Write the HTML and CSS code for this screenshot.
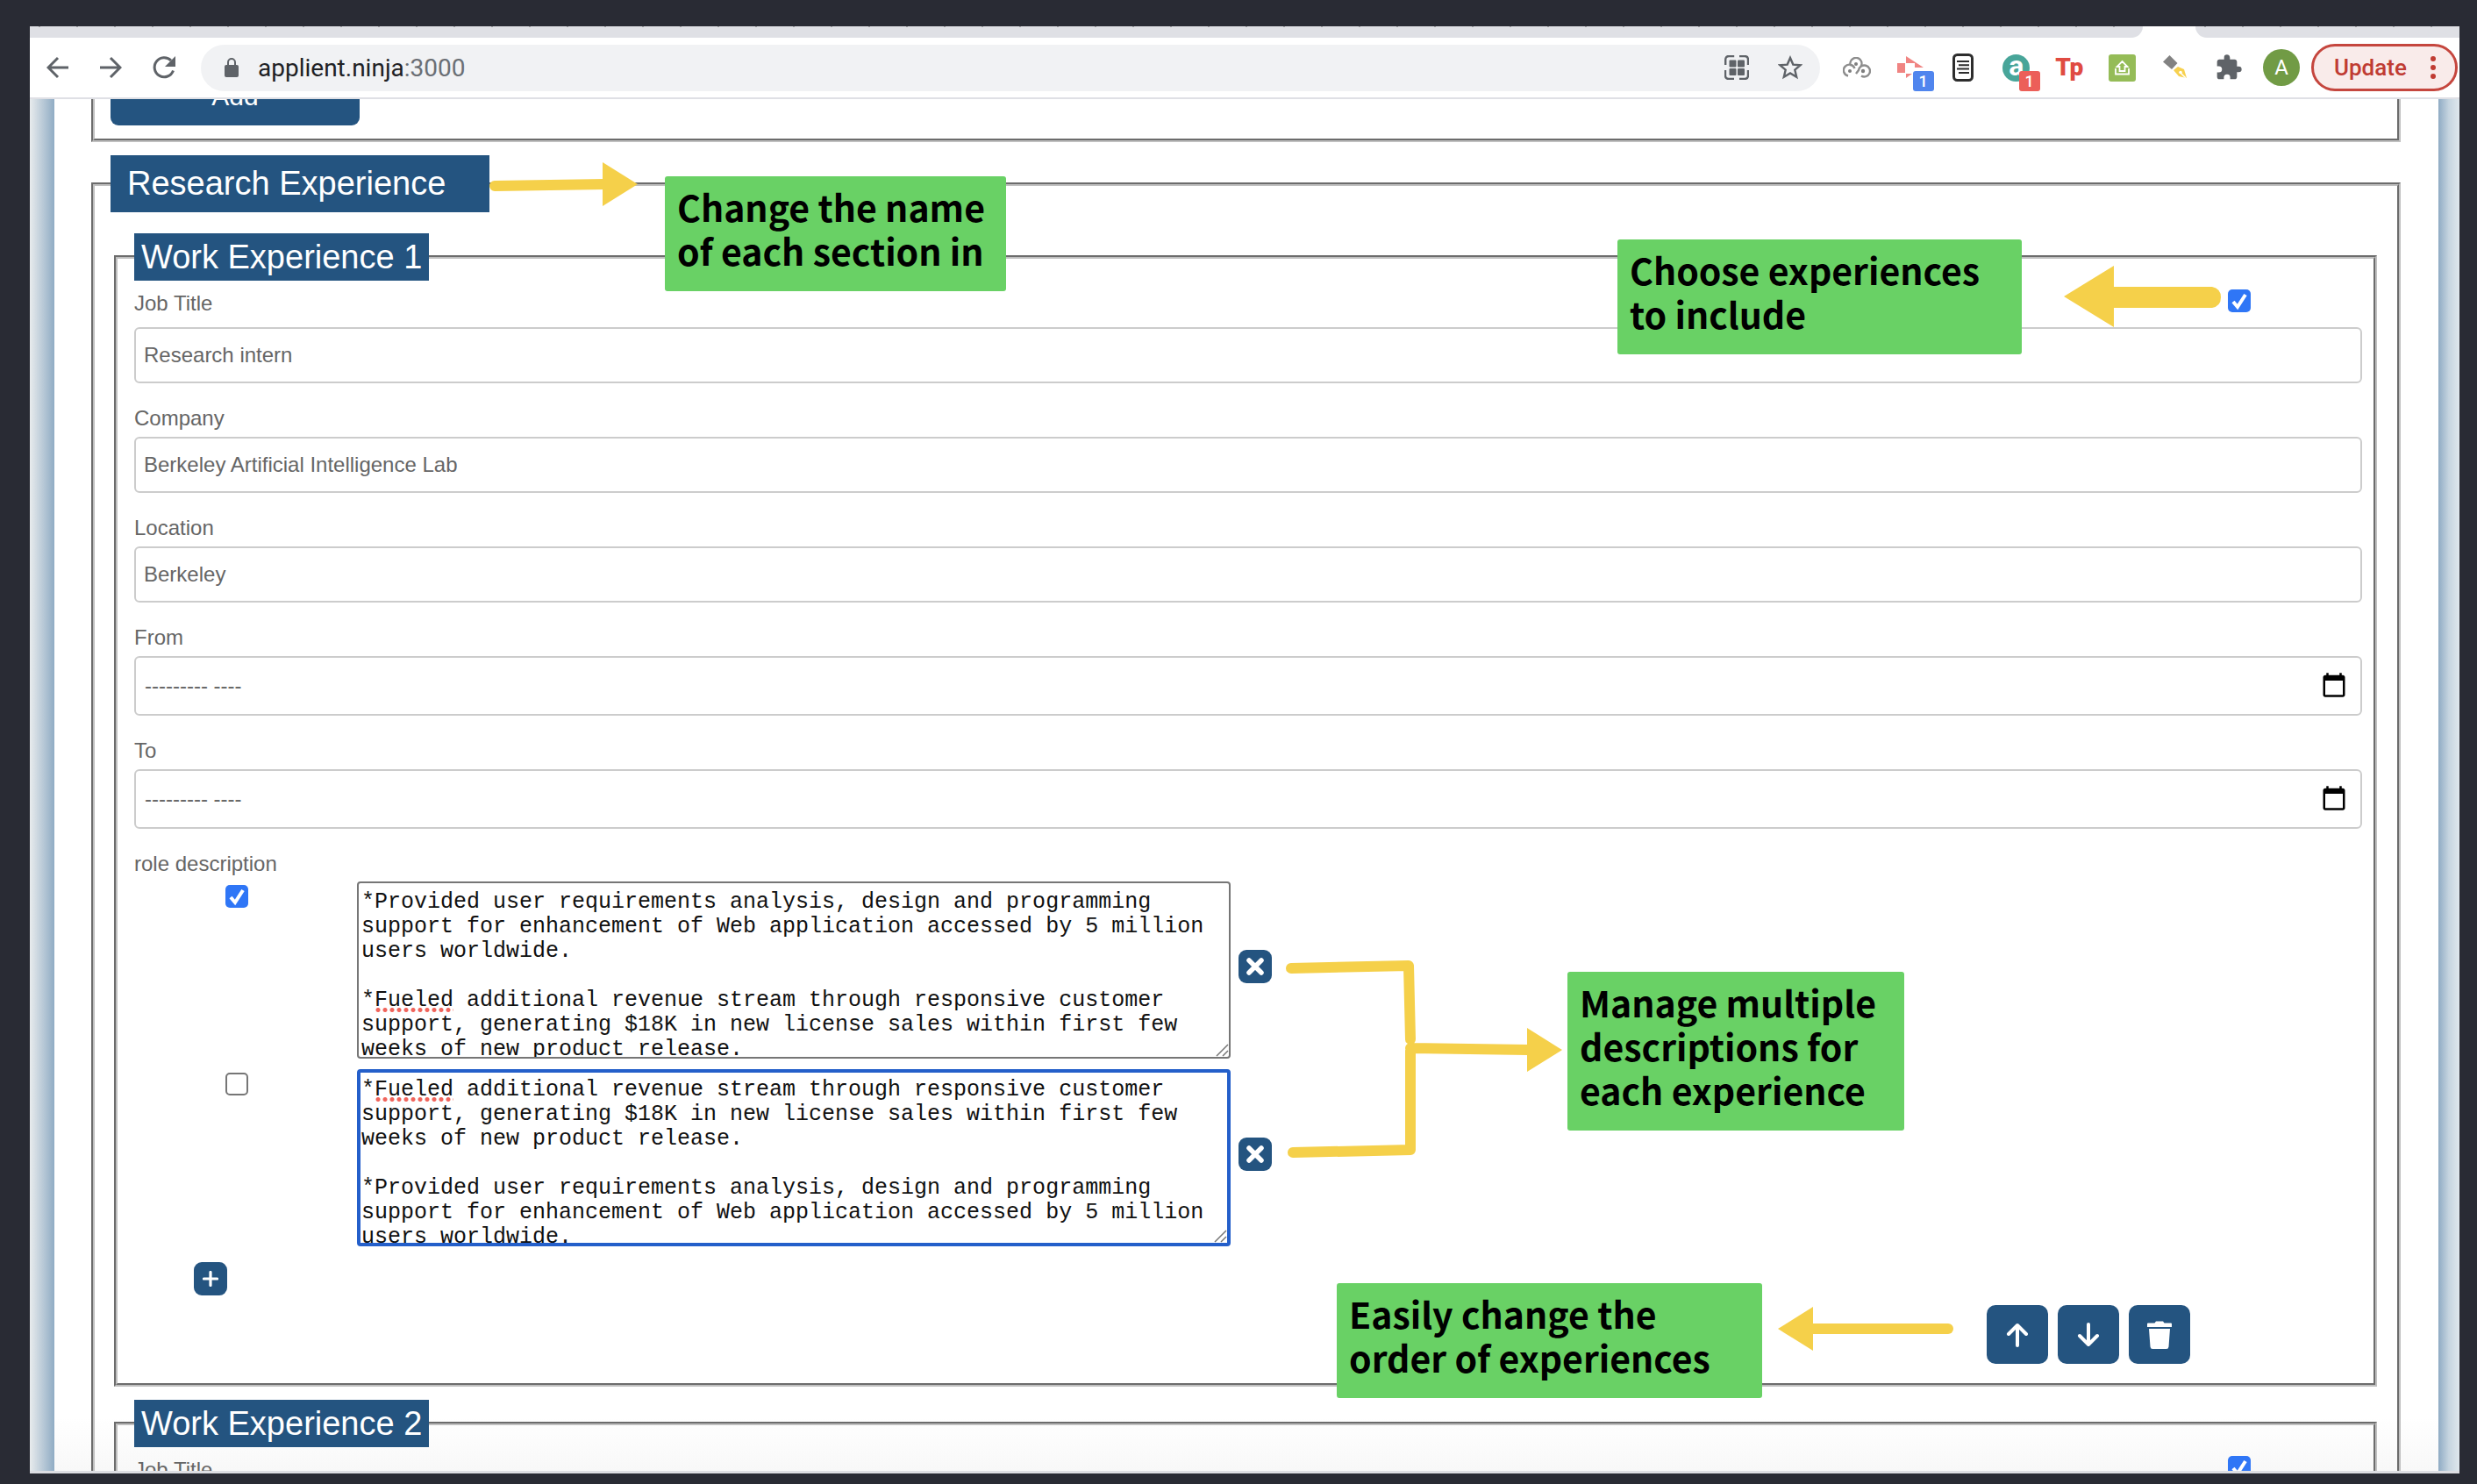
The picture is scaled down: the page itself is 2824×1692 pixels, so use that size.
FILE: index.html
```html
<!DOCTYPE html>
<html lang="en">
<head>
<meta charset="utf-8">
<meta name="viewport" content="width=device-width, initial-scale=1">
<title>applient.ninja</title>
<link rel="stylesheet" href="styles.css">
</head>
<body>
<div class="window">
  <div class="tabs"><div class="tabs-before"></div><div class="tabs-after"></div></div>

  <header class="toolbar">
    <nav class="nav" aria-label="History">
      <button class="icon-btn" type="button" aria-label="Back"><svg width="26" height="26" viewBox="0 0 26 26"><path d="M25 13H3M13 2L2 13l11 11" class="line"/></svg></button>
      <button class="icon-btn" type="button" aria-label="Forward"><svg width="26" height="26" viewBox="0 0 26 26"><path d="M1 13h22M13 2l11 11-11 11" class="line"/></svg></button>
      <button class="icon-btn" type="button" aria-label="Reload"><svg width="28" height="28" viewBox="0 0 28 28"><path d="M24.500 17.500A11 11 0 1 1 22 6" class="line"/><path d="M27 1v12H15z" fill="#5f6368"/></svg></button>
    </nav>
    <div class="omnibox">
      <svg width="18" height="24" viewBox="0 0 18 24"><rect x="1" y="9" width="16" height="14" rx="2" fill="#5f6368"/><path d="M5 10V6a4 4 0 0 1 8 0v4" fill="none" stroke="#5f6368" stroke-width="2"/></svg>
      <span class="url">applient.ninja<span class="port">:3000</span></span>
      <svg width="28" height="28" viewBox="0 0 28 28"><g fill="none" stroke="#5f6368" stroke-width="2.400"><path d="M1.200 11V5q0-4 4-4h6M17 1h6q4 0 4 4v6M27 17v6q0 4-4 4h-6M11 27H5q-4 0-4-4v-6"/></g><g fill="#5f6368"><rect x="5.500" y="5.500" width="8" height="8" rx="1"/><rect x="15" y="5.500" width="8" height="8" rx="1"/><rect x="5.500" y="15" width="8" height="8" rx="1"/><rect x="15" y="15" width="8" height="8" rx="1"/></g></svg>
      <svg width="28" height="28" viewBox="0 0 28 28"><path d="M14 3l3.300 7.600 8.200.7-6.200 5.400 1.900 8.100L14 20.500l-7.200 4.300 1.900-8.100-6.200-5.400 8.200-.7z" fill="none" stroke="#5f6368" stroke-width="2.400"/></svg>
    </div>
    <div class="extensions">
      <span class="ext"><svg width="32" height="24" viewBox="0 0 32 24"><g fill="none" stroke="#8d8d8d" stroke-width="2.400"><path d="M9 10a6.500 6.500 0 1 1 11 1.500M6 21.500A6.500 6.500 0 1 1 13.500 13M15 19l3-4a6.500 6.500 0 1 1 3 6.500"/></g><g fill="#7d7d7d"><circle cx="15" cy="8" r="2"/><circle cx="8" cy="16" r="2"/><circle cx="23" cy="16" r="2.200"/></g></svg></span>
      <span class="ext"><svg width="32" height="28" viewBox="0 0 32 28"><path d="M1 9h9v11H1zM11 1l20 13H21V9H11zM11 21h7l-7 5z" fill="#f08482"/></svg><span class="count count-blue">1</span></span>
      <span class="ext"><svg width="24" height="32" viewBox="0 0 24 32"><rect x="1.500" y="1.500" width="21" height="29" rx="4" fill="#fff" stroke="#2d2d2d" stroke-width="3"/><path d="M5 9h14M7 13.300h12M5 17.600h14M7 22h12" stroke="#2d2d2d" stroke-width="2"/></svg></span>
      <span class="ext"><span class="a-logo">a</span><span class="count count-red">1</span></span>
      <span class="ext tp-logo">Tp</span>
      <span class="ext"><svg width="31" height="31" viewBox="0 0 31 31"><rect width="31" height="31" rx="3" fill="#95bc57"/><path d="M15.500 8l6 6h-3v5h-6v-5h-3zM8 16v6.500h15V16" fill="none" stroke="#fff" stroke-width="1.800"/></svg></span>
      <span class="ext"><svg width="28" height="28" viewBox="0 0 28 28"><path d="M7.500 0l9 9-6.500 7L0 7.500z" fill="#828282"/><path d="M12 17l5-4 7 3 3 10-9-2z" fill="#f7d14f"/><path d="M26 26l-6-6" stroke="#fff" stroke-width="1.500"/><circle cx="20" cy="19.500" r="1.800" fill="#fff"/></svg></span>
      <span class="ext"><svg width="32" height="32" viewBox="0 0 24 24"><path d="M20.500 11H19V7c0-1.100-.9-2-2-2h-4V3.500a2.500 2.500 0 0 0-5 0V5H4c-1.100 0-2 .9-2 2v3.800h1.500a2.700 2.700 0 0 1 0 5.400H2V20c0 1.100.9 2 2 2h3.800v-1.500a2.700 2.700 0 0 1 5.400 0V22H17c1.100 0 2-.9 2-2v-4h1.500a2.500 2.500 0 0 0 0-5z" fill="#5f6368"/></svg></span>
    </div>
    <button class="avatar" type="button" aria-label="Profile A">A</button>
    <button class="update" type="button">Update <svg width="6" height="26" viewBox="0 0 6 26"><g fill="#c03c33"><circle cx="3" cy="3" r="3"/><circle cx="3" cy="13" r="3"/><circle cx="3" cy="23" r="3"/></g></svg></button>
  </header>

  <main class="viewport">
    <div class="sheet">
      <fieldset class="section section-scrolled">
        <button class="add-btn" type="button">Add</button>
      </fieldset>

      <fieldset class="section">
        <legend class="section-legend"><input class="section-name" type="text" value="Research Experience" aria-label="Section name"></legend>

        <fieldset class="job">
          <legend class="job-legend">Work Experience 1</legend>
          <div class="job-head"><label class="label" for="title1">Job Title</label><input class="check" type="checkbox" checked aria-label="Include Work Experience 1"></div>
          <input class="field" id="title1" type="text" value="Research intern">
          <label class="label" for="company1">Company</label>
          <input class="field" id="company1" type="text" value="Berkeley Artificial Intelligence Lab">
          <label class="label" for="location1">Location</label>
          <input class="field" id="location1" type="text" value="Berkeley">
          <label class="label" for="from1">From</label>
          <input class="field month" id="from1" type="month">
          <label class="label" for="to1">To</label>
          <input class="field month" id="to1" type="month">
          <span class="label label-role">role description</span>
          <div class="role">
            <input class="check" type="checkbox" checked aria-label="Use description 1">
            <div class="role-text">
              <textarea class="text" spellcheck="false" aria-label="Description 1">*Provided user requirements analysis, design and programming support for enhancement of Web application accessed by 5 million users worldwide.

*Fueled additional revenue stream through responsive customer support, generating $18K in new license sales within first few weeks of new product release.</textarea>
              <span class="typo typo-line5"></span>
            </div>
            <button class="small-btn" type="button" aria-label="Remove description 1"><svg width="22" height="22" viewBox="0 0 22 22"><path d="M4 4l14 14M18 4L4 18" stroke="#fff" stroke-width="5.500" stroke-linecap="round"/></svg></button>
          </div>
          <div class="role">
            <input class="check" type="checkbox" aria-label="Use description 2">
            <div class="role-text">
              <textarea class="text text-active" spellcheck="false" aria-label="Description 2">*Fueled additional revenue stream through responsive customer support, generating $18K in new license sales within first few weeks of new product release.

*Provided user requirements analysis, design and programming support for enhancement of Web application accessed by 5 million users worldwide.</textarea>
              <span class="typo typo-line1"></span>
            </div>
            <button class="small-btn" type="button" aria-label="Remove description 2"><svg width="22" height="22" viewBox="0 0 22 22"><path d="M4 4l14 14M18 4L4 18" stroke="#fff" stroke-width="5.500" stroke-linecap="round"/></svg></button>
          </div>
          <button class="small-btn add-role" type="button" aria-label="Add description"><svg width="18" height="18" viewBox="0 0 18 18"><path d="M9 1.500v15M1.500 9h15" stroke="#fff" stroke-width="3.200" stroke-linecap="round"/></svg></button>
          <div class="order">
            <button class="order-btn" type="button" aria-label="Move up"><svg width="26" height="28" viewBox="0 0 26 28"><path d="M13 26V3M3 13L13 3l10 10" class="arrow"/></svg></button>
            <button class="order-btn" type="button" aria-label="Move down"><svg width="26" height="28" viewBox="0 0 26 28"><path d="M13 2v23M3 15l10 10 10-10" class="arrow"/></svg></button>
            <button class="order-btn" type="button" aria-label="Delete"><svg width="28" height="32" viewBox="0 0 28 32"><path d="M1 2.500h7.500L10 .5h8l1.500 2H27q1 0 1 1V7H0V3.500q0-1 1-1zM2 9h24l-1.500 20.500q-.2 2.500-2.700 2.500H6.200q-2.500 0-2.700-2.500z" fill="#fff"/></svg></button>
          </div>
        </fieldset>

        <fieldset class="job">
          <legend class="job-legend">Work Experience 2</legend>
          <div class="job-head"><label class="label" for="title2">Job Title</label><input class="check" type="checkbox" checked aria-label="Include Work Experience 2"></div>
          <input class="field" id="title2" type="text">
        </fieldset>
      </fieldset>
    </div>
  </main>

  <aside class="notes">
    <p class="note note-name">Change the name<br>of each section in</p>
    <p class="note note-choose">Choose experiences<br>to include</p>
    <p class="note note-manage">Manage multiple<br>descriptions for<br>each experience</p>
    <p class="note note-order">Easily change the<br>order of experiences</p>
    <svg class="pointer pointer-name" width="170" height="50" viewBox="0 0 170 50"><path d="M6 27l126-2" class="stroke"/><path d="M129 0l40 25-40 25z"/></svg>
    <svg class="pointer pointer-choose" width="180" height="72" viewBox="0 0 180 72"><path d="M0 36L57 1v24h112q10 2 10 12t-10 12H57v22z"/></svg>
    <svg class="pointer pointer-manage" width="316" height="228" viewBox="0 0 316 228"><path d="M6 11l134-3 2 84M142 102l134 2M8 221l134-3V105" class="stroke"/><path d="M275 79l40 25-40 25z"/></svg>
    <svg class="pointer pointer-order" width="200" height="50" viewBox="0 0 200 50"><path d="M38 25h156" class="stroke"/><path d="M0 25L40 0v50z"/></svg>
  </aside>
</div>
</body>
</html>
```
FILE: styles.css
```css
* { box-sizing: border-box; }

body {
  margin: 0;
  padding: 30px 20px 12px 34px;
  background: #292b34;
  font-family: "Liberation Sans", Arial, sans-serif;
  font-size: 24px;
  color: #666;
}

button { border: 0; padding: 0; font: inherit; }
svg { display: block; flex: none; }

.window {
  position: relative;
  display: flex;
  flex-direction: column;
  height: calc(100vh - 42px);
  overflow: hidden;
  background: #fff;
  border-bottom: 3px solid #dcdde2;
}

/* Browser chrome */
.tabs { display: flex; justify-content: space-between; gap: 60px; flex: none; height: 13px; }
.tabs-before, .tabs-after {
  background: repeating-linear-gradient(90deg, #a5a6aa 0 2px, transparent 2px 43px) 10px 0 / 100% 1px no-repeat, #dfe0e5;
}
.tabs-before { flex: 1; border-bottom-right-radius: 13px; }
.tabs-after { flex: 0 0 301px; border-bottom-left-radius: 13px; }

.toolbar {
  display: flex;
  align-items: center;
  flex: none;
  height: 70px;
  padding: 0 2px 0 19px;
  border-bottom: 2px solid #dfe0e5;
  font-family: Roboto, sans-serif;
}
.nav { display: flex; gap: 34px; margin-right: 28px; }
.icon-btn { background: none; }
.line { fill: none; stroke: #5f6368; stroke-width: 3; }
.omnibox {
  display: flex;
  align-items: center;
  flex: 1;
  gap: 33px;
  height: 53px;
  padding: 0 20px 0 26px;
  border-radius: 27px;
  background: #f1f2f4;
}
.url { flex: 1; margin-left: -12px; font-size: 28px; color: #202124; }
.port { color: #6b6f74; }
.extensions { display: grid; grid-template-columns: repeat(8, 1fr); flex: 0 0 484px; margin: 0 9px 0 12px; }
.ext { position: relative; display: flex; align-items: center; justify-content: center; height: 42px; }
.count {
  position: absolute;
  left: 33px;
  top: 25px;
  width: 24px;
  height: 23px;
  border-radius: 3px;
  color: #fff;
  font-size: 18px;
  font-weight: 500;
  line-height: 24px;
  text-align: center;
}
.count-blue { background: #5085ee; }
.count-red { background: #ec5f59; }
.a-logo {
  width: 31px;
  height: 31px;
  border-radius: 50%;
  background: #48a599;
  color: #fff;
  font-size: 32px;
  font-weight: 700;
  line-height: 26px;
  text-align: center;
}
.tp-logo { color: #e04b42; font-size: 28px; font-weight: 900; line-height: 28px; }
.avatar { width: 42px; height: 42px; border-radius: 50%; background: #719b45; color: #fff; }
.update {
  display: flex;
  align-items: center;
  justify-content: space-between;
  width: 167px;
  height: 54px;
  margin-left: 13px;
  padding: 0 22px 0 23px;
  border: 3px solid #c5463e;
  border-radius: 27px;
  background: #f9ebea;
  color: #c03c33;
  font-size: 26px;
  font-weight: 500;
}

/* Page */
.viewport {
  flex: 1;
  min-height: 0;
  overflow: hidden;
  padding: 0 24px 0 28px;
  background:
    linear-gradient(90deg, #e8ebed, #90acc4) 0 0 / 28px 100% no-repeat,
    linear-gradient(90deg, #8fabc4, #c6d5e0 50%, #dfe7ed) 100% 0 / 24px 100% no-repeat,
    linear-gradient(0deg, #f8f8f8, #fff) 0 100% / 100% 60px no-repeat;
}
.sheet { padding: 0 43px 0 42px; }

.section, .job { min-width: 0; margin: 0 0 15px; border: 4px groove #c0c0c0; }
.section { padding: 24px 23px 0 22px; }
.section-scrolled { margin-top: -61px; padding: 20px 18px 15px; }
.section-legend { padding: 0; margin-left: -4px; }
.section-name {
  display: block;
  width: 432px;
  height: 65px;
  padding: 0 19px;
  border: 0;
  background: #245480;
  color: #fff;
  font: 38px "Liberation Sans", Arial, sans-serif;
}
.add-btn {
  display: block;
  width: 284px;
  height: 67px;
  border-radius: 9px;
  background: #245480;
  color: #fff;
  font-size: 30px;
}
.job { padding: 0 13px 22px 19px; }
.job-legend { padding: 5px 8px; background: #245480; color: #fff; font-size: 38px; line-height: 44px; }

.label { display: block; margin-top: 24px; line-height: 32px; }
.label-role { margin-bottom: 4px; }
.job-head { display: flex; justify-content: space-between; padding: 10px 127px 0 0; height: 53px; }
.job-head .label { margin: 0; }

.field {
  display: block;
  width: 100%;
  height: 64px;
  margin-top: 5px;
  padding: 0 9px;
  border: 2px solid #ccc;
  border-radius: 6px;
  background: #fff;
  color: #666;
  font: 24px "Liberation Sans", Arial, sans-serif;
}
.job-head + .field { margin-top: 0; }
.month { display: flex; align-items: center; height: 68px; padding: 0 14px 0 10px; }
.month::before { content: "--------- ----"; flex: 1; word-spacing: normal; }
.month::-webkit-datetime-edit { display: none; }
.month::-webkit-calendar-picker-indicator { width: 32px; height: 32px; padding: 0; }

.check {
  appearance: none;
  flex: none;
  width: 26px;
  height: 26px;
  margin: 0;
  border: 2px solid #767676;
  border-radius: 5px;
  background: #fff;
}
.check:checked {
  border: 0;
  background: #2f76f6 url("data:image/svg+xml,%3Csvg xmlns='http://www.w3.org/2000/svg' viewBox='0 0 26 26'%3E%3Cpath d='M6 14l5 6L20 6' fill='none' stroke='%23fff' stroke-width='4'/%3E%3C/svg%3E");
}

.role { display: flex; align-items: flex-start; padding-left: 104px; margin-bottom: 12px; }
.role > .check { margin-top: 4px; }
.role-text { position: relative; margin: 0 9px 0 124px; }
.text {
  display: block;
  width: 996px;
  height: 202px;
  padding: 8px 3px 0;
  border: 2px solid #767676;
  border-radius: 4px;
  outline: 0;
  background: #fff;
  color: #111;
  overflow: hidden;
  resize: both;
  font: 25px/28px "Liberation Mono", "Courier New", monospace;
}
.text::-webkit-resizer {
  background: url("data:image/svg+xml,%3Csvg xmlns='http://www.w3.org/2000/svg' viewBox='0 0 15 15'%3E%3Cpath d='M1 14L14 1M8 14l6-6' stroke='%23777' stroke-width='1.500'/%3E%3C/svg%3E");
}
.text-active { padding: 6px 1px 0; border: 4px solid #245fca; }
/* Spelling marks */
.typo {
  position: absolute;
  left: 20px;
  width: 90px;
  height: 5px;
  background: radial-gradient(circle, #f0655c 2px, transparent 3px) 0 0 / 8px 5px;
}
.typo-line5 { top: 144px; }
.typo-line1 { top: 32px; }

.small-btn {
  display: flex;
  align-items: center;
  justify-content: center;
  flex: none;
  width: 38px;
  height: 38px;
  border-radius: 9px;
  background: #245480;
}
.role .small-btn { margin-top: 78px; }
.add-role { margin: 18px 0 11px 68px; }
.order { display: flex; justify-content: flex-end; gap: 11px; padding-right: 196px; }
.order-btn {
  display: flex;
  align-items: center;
  justify-content: center;
  width: 70px;
  height: 67px;
  border-radius: 10px;
  background: #245480;
}
.arrow { fill: none; stroke: #fff; stroke-width: 4; stroke-linecap: round; stroke-linejoin: round; }

/* Callouts over the page */
.note {
  position: absolute;
  margin: 0;
  padding: 9px 14px 22px;
  border-radius: 3px;
  background: #69d165;
  color: #000;
  font: 700 41px/50px "Noto Sans CJK SC", sans-serif;
  white-space: nowrap;
}
.note-name { left: 724px; top: 171px; width: 389px; }
.note-choose { left: 1810px; top: 243px; width: 461px; }
.note-manage { left: 1753px; top: 1078px; width: 384px; }
.note-order { left: 1490px; top: 1433px; width: 485px; }
.pointer { position: absolute; fill: #f5d04a; }
.stroke { fill: none; stroke: #f5d04a; stroke-width: 12; stroke-linecap: round; stroke-linejoin: round; }
.pointer-name { left: 524px; top: 155px; }
.pointer-choose { left: 2319px; top: 272px; }
.pointer-manage { left: 1432px; top: 1063px; }
.pointer-order { left: 1993px; top: 1460px; }
```
